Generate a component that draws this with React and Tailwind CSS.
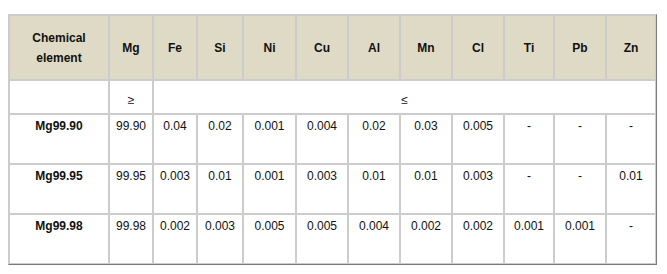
import React from 'react';

const elements = ['Mg', 'Fe', 'Si', 'Ni', 'Cu', 'Al', 'Mn', 'Cl', 'Ti', 'Pb', 'Zn'];
const widths = ['w-[100px]', 'w-[44px]', 'w-[44px]', 'w-[46px]', 'w-[53px]', 'w-[52px]', 'w-[52px]', 'w-[52px]', 'w-[52px]', 'w-[50px]', 'w-[52px]', 'w-[50px]'];

const grades = [
  { name: 'Mg99.90', values: ['99.90', '0.04', '0.02', '0.001', '0.004', '0.02', '0.03', '0.005', '-', '-', '-'] },
  { name: 'Mg99.95', values: ['99.95', '0.003', '0.01', '0.001', '0.003', '0.01', '0.01', '0.003', '-', '-', '0.01'] },
  { name: 'Mg99.98', values: ['99.98', '0.002', '0.003', '0.005', '0.005', '0.004', '0.002', '0.002', '0.001', '0.001', '-'] },
];

const cell = 'border border-[#cccccc] text-center';

const App = () => {
  return (
    <div className="w-[667px] h-[274px] bg-white pl-[8px] pt-[14px] font-['Liberation_Sans',Arial,sans-serif] text-[12px] text-[#111]">
      <table className="table-fixed border-separate border-spacing-0 w-[649px] border border-t-[#cccccc] border-l-[#cccccc] border-r-[#7a7a7a] border-b-[#7a7a7a]">
        <colgroup>
          {widths.map((w, i) => (
            <col key={i} className={w} />
          ))}
        </colgroup>
        <thead>
          {/* element header */}
          <tr className="h-[65px] bg-[#dfdac5]">
            <th className={`${cell} font-bold leading-[20px] align-middle`}>
              Chemical<br />element
            </th>
            {elements.map((el) => (
              <th key={el} className={`${cell} font-bold align-middle`}>{el}</th>
            ))}
          </tr>
        </thead>
        <tbody>
          <tr className="h-[34px]">
            <td className={cell}></td>
            <td className={`${cell} align-middle pt-[6px]`}>≥</td>
            <td colSpan={10} className={`${cell} align-middle pt-[6px]`}>≤</td>
          </tr>
          {grades.map((g) => (
            <tr key={g.name} className="h-[50px]">
              <td className={`${cell} font-bold align-top leading-[20px] pt-[1px]`}>{g.name}</td>
              {g.values.map((v, i) => (
                <td key={i} className={`${cell} align-top leading-[20px] pt-[1px]`}>{v}</td>
              ))}
            </tr>
          ))}
        </tbody>
      </table>
    </div>
  );
};

export default App;
